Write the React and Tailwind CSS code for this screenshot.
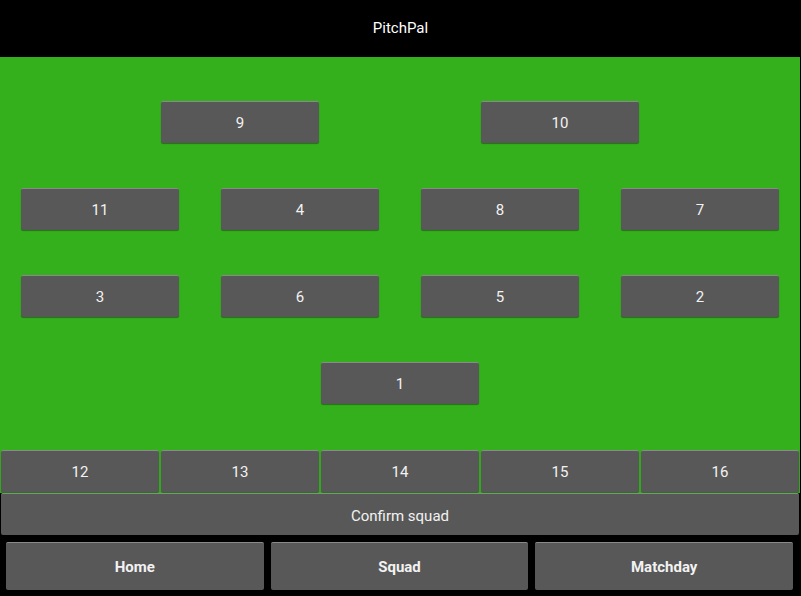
const btn =
  "flex items-center justify-center bg-[#585858] text-[#f2f2f2] text-[15px] rounded-[2px] border-t border-[#8a8a8a] shadow-[0_1px_1px_rgba(0,0,0,0.35)]";

function Slot({ label, className = "" }) {
  return (
    <div className={`${btn} h-[42px] w-[158px] pt-px ${className}`}>
      {label}
    </div>
  );
}

export default function App() {
  const mid = ["11", "4", "8", "7"];
  const back = ["3", "6", "5", "2"];
  const bench = ["12", "13", "14", "15", "16"];
  const nav = ["Home", "Squad", "Matchday"];

  return (
    <div className="w-[801px] h-[596px] bg-black flex flex-col font-['Roboto',sans-serif] overflow-hidden">
      <header className="h-[57px] flex items-center justify-center text-white text-[15px]">
        PitchPal
      </header>

      <div className="w-[800px] bg-[#33b01c] flex flex-col pt-[44px]">
        <div className="flex justify-center gap-[162px]">
          <Slot label="9" />
          <Slot label="10" />
        </div>
        <div className="grid grid-cols-4 mt-[45px]">
          {mid.map((n) => (
            <Slot key={n} label={n} className="mx-auto" />
          ))}
        </div>
        <div className="grid grid-cols-4 mt-[45px]">
          {back.map((n) => (
            <Slot key={n} label={n} className="mx-auto" />
          ))}
        </div>
        <div className="flex justify-center mt-[45px]">
          <Slot label="1" />
        </div>
        <div className="flex gap-[2px] px-px pb-px mt-[46px]">
          {bench.map((n) => (
            <Slot key={n} label={n} />
          ))}
        </div>
      </div>

      <div className="px-px w-[800px]">
        <div className={`${btn} h-[42px] w-full pt-[3px]`}>Confirm squad</div>
      </div>

      <nav className="flex gap-[7px] pl-[6px] pr-[8px] pt-[7px]">
        {nav.map((n) => (
          <div key={n} className={`${btn} flex-1 h-[48px] pt-[2px] font-bold`}>
            {n}
          </div>
        ))}
      </nav>
    </div>
  );
}
